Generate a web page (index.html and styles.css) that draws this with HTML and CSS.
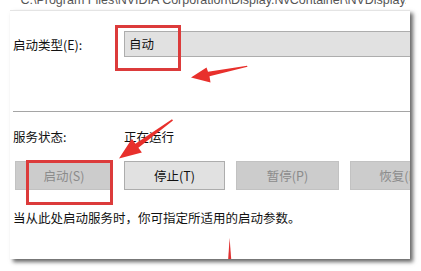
FILE: index.html
```html
<!DOCTYPE html>
<html lang="zh-CN">
<head>
<meta charset="utf-8">
<title>服务属性</title>
<link rel="stylesheet" href="styles.css">
</head>
<body>
<div class="page">
  <div class="path"><span>"C:\Program Files\NVIDIA Corporation\Display.NvContainer\NVDisplay.Container.exe" -s NVDisplay.ContainerLocalSystem</span></div>
  <div class="panel">
    <div class="row row-type">
      <div class="label">启动类型(E):</div>
      <div class="combo">自动</div>
    </div>
    <div class="sep"></div>
    <div class="row row-status">
      <div class="label">服务状态:</div>
      <div class="value">正在运行</div>
    </div>
    <div class="buttons">
      <div class="btn btn-disabled btn-1">启动(S)</div>
      <div class="btn btn-2">停止(T)</div>
      <div class="btn btn-disabled btn-3">暂停(P)</div>
      <div class="btn btn-disabled btn-4">恢复(R)</div>
    </div>
    <div class="desc">当从此处启动服务时，你可指定所适用的启动参数。</div>
  </div>

  <div class="mark mark-1"></div>
  <div class="mark mark-2"></div>
  <svg class="arrows" width="421" height="271" viewBox="0 0 421 271">
    <polygon points="191,77.5 206.5,67.5 208,71.8 247,65.8 247.5,66.8 209.5,76.3 210.5,82.5" fill="#e8302c"/>
    <polygon points="119,158.5 131.9,138.8 135.4,143.7 172,119.3 173,120.6 138.4,147.7 141.9,152.6" fill="#e8302c"/>
    <polygon points="229.6,238 231.2,259 228.2,259" fill="#e03030"/>
  </svg>
</div>
</body>
</html>
```

FILE: styles.css
```css
html, body {
  margin: 0;
  padding: 0;
  background: #ffffff;
}

.page {
  position: relative;
  width: 421px;
  height: 271px;
  overflow: hidden;
  background: #ffffff;
  font-family: "Noto Sans CJK SC", "Noto Sans", sans-serif;
  font-size: 12.5px;
  color: #111111;
}

.path {
  height: 10px;
  overflow: hidden;
  padding-left: 16px;
  width: 390px;
  white-space: nowrap;
  font-family: "Liberation Sans", Arial, sans-serif;
  font-size: 12.5px;
  color: #555555;
}

.path span {
  display: block;
  line-height: 14px;
  margin-top: -7px;
}

.panel {
  margin-left: 10px;
  width: 400px;
  height: 249px;
  box-sizing: border-box;
  padding-left: 3px;
  background: #ffffff;
  border-top: 1px solid #e4e4e4;
  box-shadow: 3px 3px 4px rgba(0, 0, 0, 0.6);
  overflow: hidden;
  display: flex;
  flex-direction: column;
}

.row {
  display: flex;
  align-items: center;
  white-space: nowrap;
}

.label {
  width: 111px;
  flex: none;
}

.row-type {
  margin-top: 20px;
  height: 26px;
}

.combo {
  flex: none;
  width: 300px;
  height: 26px;
  box-sizing: border-box;
  background: #e1e1e1;
  border: 1px solid #adadad;
  padding-left: 4px;
  line-height: 24px;
}

.sep {
  margin-top: 54px;
  height: 1px;
  background: #a5a5a5;
}

.row-status {
  margin-top: 16px;
  height: 16px;
}

.buttons {
  margin-top: 17px;
  margin-left: 2px;
  display: flex;
  gap: 11px;
}

.btn {
  flex: none;
  height: 29px;
  box-sizing: border-box;
  border: 1px solid #adadad;
  background: #e1e1e1;
  text-align: center;
  line-height: 27px;
  white-space: nowrap;
  overflow: hidden;
}

.btn-disabled {
  background: #cccccc;
  border-color: #c2c2c2;
  color: #8b8b8b;
}

.btn-1 { width: 98px; }
.btn-2 { width: 101px; }
.btn-3 { width: 103px; }
.btn-4 { width: 100px; }

.desc {
  margin-top: 20px;
  line-height: 16px;
  white-space: nowrap;
}

.mark {
  position: absolute;
  border: 3px solid #dc3b3b;
  box-sizing: border-box;
}

.mark-1 {
  left: 115px;
  top: 25px;
  width: 66px;
  height: 46px;
}

.mark-2 {
  left: 26px;
  top: 160px;
  width: 87px;
  height: 45px;
}

.arrows {
  position: absolute;
  left: 0;
  top: 0;
}
```
